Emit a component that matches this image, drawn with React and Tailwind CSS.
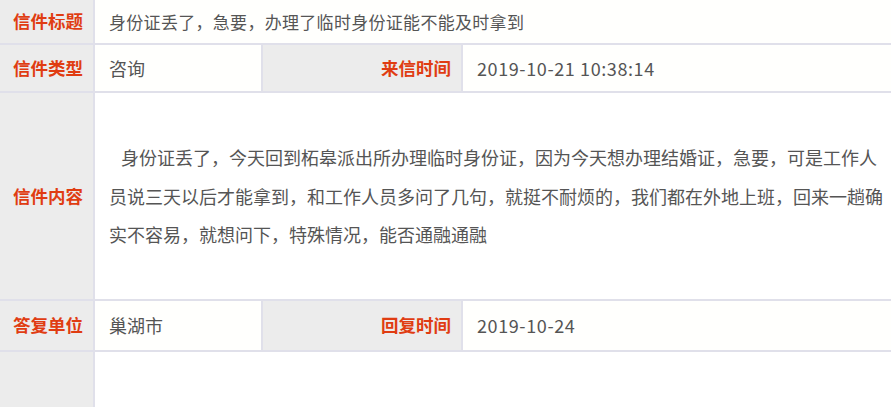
const cjk = "font-['Microsoft_YaHei','Noto_Sans_CJK_SC',sans-serif]";

const Label = ({ children }) => (
  <div className={`bg-[#ececec] flex items-center justify-end pr-[10px] text-[17.5px] font-bold text-[#e03c12] ${cjk}`}>
    {children}
  </div>
);

const Value = ({ children, className = "text-[17px]" }) => (
  <div className={`bg-[#fffffd] flex items-center pl-[14px] text-[#555] ${cjk} ${className}`}>
    {children}
  </div>
);

export default function App() {
  return (
    <div className="w-[891px] h-[407px] overflow-hidden bg-white">
      <div className="grid grid-cols-[93px_166px_198px_1fr] grid-rows-[43px_46px_206px_49px_80px] gap-[2px] bg-[#e0e0ea]">
        <Label>信件标题</Label>
        <Value className="col-span-3 text-[17px] tracking-[0.3px]">身份证丢了，急要，办理了临时身份证能不能及时拿到</Value>

        <Label>信件类型</Label>
        <Value className="text-[18px]">咨询</Value>
        <Label>来信时间</Label>
        <Value className="text-[18px] tracking-[0.6px]">2019-10-21 10:38:14</Value>

        <Label>信件内容</Label>
        <div className={`col-span-3 min-w-0 overflow-hidden bg-white flex items-center pl-[14px] text-[18px] leading-[38.5px] text-[#555] ${cjk}`}>
          <p className="indent-[12px] whitespace-nowrap">
            身份证丢了，今天回到柘皋派出所办理临时身份证，因为今天想办理结婚证，急要，可是工作人
            <br />
            员说三天以后才能拿到，和工作人员多问了几句，就挺不耐烦的，我们都在外地上班，回来一趟确
            <br />
            实不容易，就想问下，特殊情况，能否通融通融
          </p>
        </div>

        <Label>答复单位</Label>
        <Value className="text-[18px]">巢湖市</Value>
        <Label>回复时间</Label>
        <Value className="text-[18px] tracking-[0.6px]">2019-10-24</Value>

        <Label />
        <div className="col-span-3 bg-white" />
      </div>
    </div>
  );
}
